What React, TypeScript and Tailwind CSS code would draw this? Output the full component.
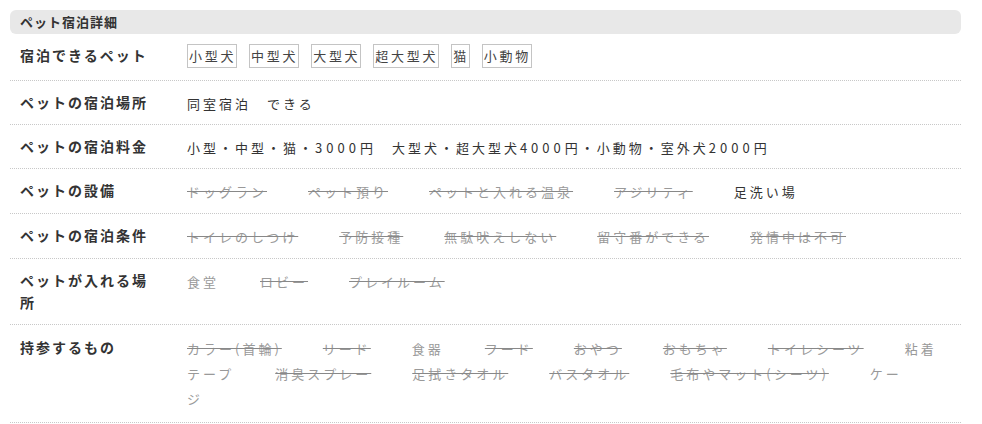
import React from 'react';

type Item = { text: string; off?: boolean; muted?: boolean };

const rowCls = 'flex items-start border-b border-dotted border-[#c8c8c8] pt-[10px] pb-[8px]';
const labelCls = 'w-[177px] shrink-0 pl-[10px] pr-[31px] text-[14px] font-bold leading-[22px] tracking-[2px] text-[#333]';
const valueCls = 'flex-1 pr-[22px] text-[13px] leading-[25px] tracking-[3px] text-[#333]';

const Num: React.FC<{ children: React.ReactNode }> = ({ children }) => (
  <span className="tracking-[4px]">{children}</span>
);

const ItemList: React.FC<{ items: Item[] }> = ({ items }) => (
  <div className={valueCls}>
    {items.map((it) => (
      <span
        key={it.text}
        className={
          'mr-[41px] ' +
          (it.off ? 'text-[#999] line-through decoration-[#888]' : it.muted ? 'text-[#999]' : 'text-[#333]')
        }
      >
        {it.text}
      </span>
    ))}
  </div>
);

const petTypes = ['小型犬', '中型犬', '大型犬', '超大型犬', '猫', '小動物'];

const facilities: Item[] = [
  { text: 'ドッグラン', off: true },
  { text: 'ペット預り', off: true },
  { text: 'ペットと入れる温泉', off: true },
  { text: 'アジリティ', off: true },
  { text: '足洗い場' },
];

const conditions: Item[] = [
  { text: 'トイレのしつけ', off: true },
  { text: '予防接種', off: true },
  { text: '無駄吠えしない', off: true },
  { text: '留守番ができる', off: true },
  { text: '発情中は不可', off: true },
];

const places: Item[] = [
  { text: '食堂', muted: true },
  { text: 'ロビー', off: true },
  { text: 'プレイルーム', off: true },
];

const belongings: Item[] = [
  { text: 'カラー(首輪)', off: true },
  { text: 'リード', off: true },
  { text: '食器', muted: true },
  { text: 'フード', off: true },
  { text: 'おやつ', off: true },
  { text: 'おもちゃ', off: true },
  { text: 'トイレシーツ', off: true },
  { text: '粘着テープ', muted: true },
  { text: '消臭スプレー', off: true },
  { text: '足拭きタオル', off: true },
  { text: 'バスタオル', off: true },
  { text: '毛布やマット(シーツ)', off: true },
  { text: 'ケージ', muted: true },
];

export default function App() {
  return (
    <div
      className="min-h-screen bg-white px-[10px] pt-[10px] pr-[21px]"
      style={{ fontFamily: '"Noto Sans CJK JP", "Noto Sans", sans-serif' }}
    >
      <div className="h-[24px] rounded-[6px] bg-[#e8e8e8] pl-[10px] text-[13px] font-bold leading-[24px] tracking-[1px] text-[#333]">
        ペット宿泊詳細
      </div>

      <div className={rowCls + ' pb-[12px]'}>
        <div className={labelCls}>宿泊できるペット</div>
        <div className="flex flex-1 flex-wrap gap-x-[12px]">
          {petTypes.map((p) => (
            <span
              key={p}
              className="h-[24px] border border-[#c4c4c4] pl-[1px] text-[13px] leading-[22px] tracking-[2.7px] text-[#444]"
            >
              {p}
            </span>
          ))}
        </div>
      </div>

      <div className={rowCls}>
        <div className={labelCls}>ペットの宿泊場所</div>
        <div className={valueCls}>同室宿泊　できる</div>
      </div>

      <div className={rowCls}>
        <div className={labelCls}>ペットの宿泊料金</div>
        <div className={valueCls}>
          小型・中型・猫・<Num>3000</Num>円　大型犬・超大型犬<Num>4000</Num>円・小動物・室外犬<Num>2000</Num>円
        </div>
      </div>

      <div className={rowCls + ' pb-[9px]'}>
        <div className={labelCls}>ペットの設備</div>
        <ItemList items={facilities} />
      </div>

      <div className={rowCls + ' pb-[9px]'}>
        <div className={labelCls}>ペットの宿泊条件</div>
        <ItemList items={conditions} />
      </div>

      <div className={rowCls + ' pb-[11px]'}>
        <div className={labelCls}>ペットが入れる場所</div>
        <ItemList items={places} />
      </div>

      <div className={rowCls + ' pt-[11px] pb-[11px]'}>
        <div className={labelCls}>持参するもの</div>
        <ItemList items={belongings} />
      </div>
    </div>
  );
}
